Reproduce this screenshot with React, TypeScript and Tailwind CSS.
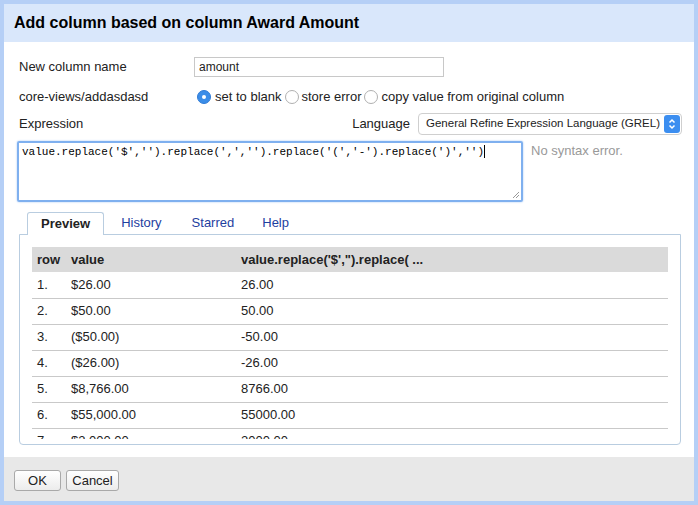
import React from 'react'

const rows = [
  ['1.', '$26.00', '26.00'],
  ['2.', '$50.00', '50.00'],
  ['3.', '($50.00)', '-50.00'],
  ['4.', '($26.00)', '-26.00'],
  ['5.', '$8,766.00', '8766.00'],
  ['6.', '$55,000.00', '55000.00'],
  ['7.', '$2,000.00', '2000.00'],
]

function Radio({ checked }: { checked?: boolean }) {
  if (checked) {
    return (
      <span className="inline-flex h-[14px] w-[14px] items-center justify-center rounded-full bg-[#3b8de8] border border-[#2f7bd6]">
        <span className="h-[4px] w-[4px] rounded-full bg-white" />
      </span>
    )
  }
  return <span className="inline-block h-[14px] w-[14px] rounded-full border border-[#b0b0b0] bg-white" />
}

export default function App() {
  return (
    <div
      className="w-[698px] h-[505px] bg-[#b5cff6] p-[4px] flex flex-col text-[13px] text-[#222]"
      style={{ fontFamily: '"Liberation Sans", Arial, sans-serif' }}
    >
      {/* Titolo */}
      <div className="h-[38px] bg-[#d9e7fb] flex items-center px-[10px]">
        <h1 className="text-[16px] font-bold text-black">Add column based on column Award Amount</h1>
      </div>

      {/* Corpo */}
      <div className="flex-1 bg-white flex flex-col px-[13px] pt-[15px]">
        <div className="flex items-center h-[20px]">
          <label className="w-[177px] pl-[2px]">New column name</label>
          <div className="w-[250px] h-[20px] border border-[#c8c8c8] flex items-center px-[4px] text-[12px]">amount</div>
        </div>

        <div className="flex items-center h-[20px] mt-[10px]">
          <label className="w-[180px] pl-[2px]">core-views/addasdasd</label>
          <div className="flex items-center">
            <Radio checked />
            <span className="ml-[4px] mr-[3px]">set to blank</span>
            <Radio />
            <span className="ml-[3px] mr-[3px]">store error</span>
            <Radio />
            <span className="ml-[3px]">copy value from original column</span>
          </div>
        </div>

        <div className="flex items-center h-[22px] mt-[6px]">
          <label className="flex-1 pl-[2px]">Expression</label>
          <span className="mr-[8px]">Language</span>
          <div className="w-[264px] h-[22px] border border-[#cfcfcf] rounded-[4px] flex items-center justify-between pl-[7px] pr-[1px] text-[11.5px] whitespace-nowrap mr-[-1px]">
            <span>General Refine Expression Language (GREL)</span>
            <span className="w-[16px] h-[18px] rounded-[3px] bg-[#3c8ef0] flex items-center justify-center">
              <svg width="8" height="12" viewBox="0 0 8 12" fill="none" stroke="white" strokeWidth="1.5">
                <path d="M1.5 4.5 L4 2 L6.5 4.5" />
                <path d="M1.5 7.5 L4 10 L6.5 7.5" />
              </svg>
            </span>
          </div>
        </div>

        <div className="flex mt-[6px]">
          <div className="relative w-[506px] h-[61px] border-2 border-[#7fb0ef] rounded-[2px] px-[3px] pt-[1px] shadow-[0_0_2px_#9cc2f2] leading-[14px]">
            <span className="text-[11px] text-black" style={{ fontFamily: '"Liberation Mono", "Courier New", monospace' }}>
              value.replace('$','').replace(',','').replace('(','-').replace(')','')
            </span>
            <span className="inline-block w-[1px] h-[13px] bg-black align-middle" />
            <svg className="absolute right-[1px] bottom-[1px]" width="8" height="8" viewBox="0 0 8 8" stroke="#999" strokeWidth="1">
              <path d="M7 1 L1 7 M7 4 L4 7" />
            </svg>
          </div>
          <span className="ml-[8px] text-[#999]">No syntax error.</span>
        </div>

        {/* Schede */}
        <div className="mt-[10px] ml-[2px] w-[662px] flex flex-col">
          <div className="flex h-[22px] items-end pl-[8px]">
            <div className="h-[23px] px-[13px] border border-[#b9cde0] border-b-0 rounded-t-[3px] bg-white font-bold flex items-center mb-[-1px] relative z-10">Preview</div>
            <div className="h-[22px] px-[13px] ml-[4px] flex items-center text-[#1e40a0]">History</div>
            <div className="h-[22px] px-[13px] ml-[4px] flex items-center text-[#1e40a0]">Starred</div>
            <div className="h-[22px] px-[13px] ml-[2px] flex items-center text-[#1e40a0]">Help</div>
          </div>
          <div className="h-[211px] border border-[#b9cde0] rounded-b-[4px] pt-[12px] px-[12px]">
            <div className="h-[192px] overflow-hidden">
              <table className="w-full border-collapse">
                <thead>
                  <tr className="h-[25px] bg-[#dadada] font-bold text-left">
                    <th className="w-[34px] pl-[5px] font-bold">row</th>
                    <th className="w-[170px] pl-[5px] font-bold">value</th>
                    <th className="pl-[5px] font-bold">value.replace('$',").replace( ...</th>
                  </tr>
                </thead>
                <tbody>
                  {rows.map((r) => (
                    <tr key={r[0]} className="h-[26px] border-b border-[#c9c9c9]">
                      <td className="pl-[5px]">{r[0]}</td>
                      <td className="pl-[5px]">{r[1]}</td>
                      <td className="pl-[5px]">{r[2]}</td>
                    </tr>
                  ))}
                </tbody>
              </table>
            </div>
          </div>
        </div>
      </div>

      {/* Pulsanti */}
      <div className="h-[44px] bg-[#e8e8e8] flex items-start pt-[13px] pl-[10px] gap-[5px]">
        <button className="w-[47px] h-[21px] border border-[#a9a9a9] rounded-[3px] bg-gradient-to-b from-white to-[#ececec] text-[13px]">OK</button>
        <button className="w-[53px] h-[21px] border border-[#a9a9a9] rounded-[3px] bg-gradient-to-b from-white to-[#ececec] text-[13px]">Cancel</button>
      </div>
    </div>
  )
}
